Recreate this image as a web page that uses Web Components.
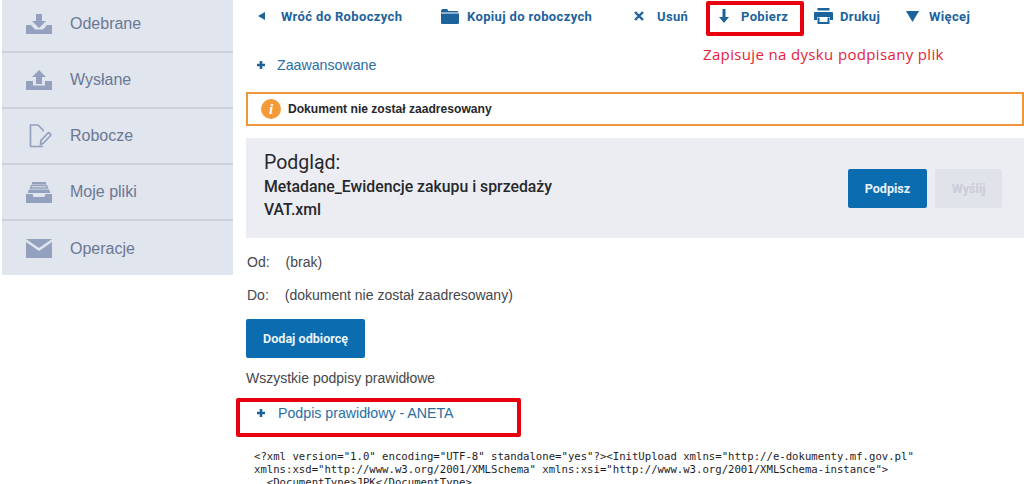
<!DOCTYPE html>
<html lang="pl">
<head>
<meta charset="utf-8">
<title>Podgląd</title>
<style>
  html, body { margin: 0; padding: 0; height: 484px; overflow: hidden; background: #fff; }
  body { font-family: "Liberation Sans", Arial, sans-serif; }
</style>
</head>
<body>
<app-shell>
  <side-nav slot="side">
    <nav-item icon="inbox" first>Odebrane</nav-item>
    <nav-item icon="outbox">Wysłane</nav-item>
    <nav-item icon="draft">Robocze</nav-item>
    <nav-item icon="files">Moje pliki</nav-item>
    <nav-item icon="mail" last>Operacje</nav-item>
  </side-nav>

  <tool-bar>
    <tool-item icon="back" gap="15" width="183">Wróć do Roboczych</tool-item>
    <tool-item icon="folder" gap="8" width="193">Kopiuj do roboczych</tool-item>
    <tool-item icon="close" gap="13" width="85">Usuń</tool-item>
    <tool-item icon="down" gap="12" width="95" marked>Pobierz</tool-item>
    <tool-item icon="print" gap="7" width="92">Drukuj</tool-item>
    <tool-item icon="more" gap="10" width="70">Więcej</tool-item>
  </tool-bar>
  <plus-link gap="12" style="margin:25px 0 0 22px">Zaawansowane</plus-link>
  <alert-box>Dokument nie został zaadresowany</alert-box>
  <preview-head>
    <span slot="title">Podgląd:</span>
    <span slot="name">Metadane_Ewidencje zakupu i sprzedaży<br>VAT.xml</span>
    <ui-button slot="actions">Podpisz</ui-button>
    <ui-button slot="actions" disabled>Wyślij</ui-button>
  </preview-head>
  <addr-line label="Od:" gap="16">(brak)</addr-line>
  <addr-line label="Do:" gap="16">(dokument nie został zaadresowany)</addr-line>
  <ui-button style="margin:16px 0 0 13px">Dodaj odbiorcę</ui-button>
  <sign-status>Wszystkie podpisy prawidłowe</sign-status>
  <plus-link boxed gap="13" style="margin:19px 0 0 22px">Podpis prawidłowy - ANETA</plus-link>
  <xml-view></xml-view>
</app-shell>

<script>
  const ICONS = {
    inbox: '<svg width="26" height="20" viewBox="0 0 26 20"><path d="M10 0h6v7h4l-7 7-7-7h4z"/><path d="M0 11h5l4 4.500h8L21 11h5v9H0z"/></svg>',
    outbox: '<svg width="26" height="20" viewBox="0 0 26 20"><path d="M13 0l7 7h-4v7h-6V7H6z"/><path d="M0 11h7v4.500h12V11h7v9H0z"/></svg>',
    draft: '<svg width="26" height="24" viewBox="0 0 26 24" fill="none" stroke="currentColor" stroke-width="1.700"><path d="M17 7.500V6l-5-5H4.500v21.500H17"/><path d="M14.500 20.500l.5-4 7-7.500c1-1 3.500 1.500 2.500 2.500l-7 7.500z"/></svg>',
    files: '<svg width="26" height="21" viewBox="0 0 26 21"><path d="M6 1.200h14" fill="none" stroke="currentColor" stroke-width="2.400"/><path d="M4.500 6l1-2.500h15l1 2.500z" fill="none" stroke="currentColor" stroke-width="1.400"/><path d="M3 7.500h20l1.500 3.500h-23z"/><path d="M0 12h6.500l1 3h11l1-3H26v9H0z"/></svg>',
    mail: '<svg width="26" height="19" viewBox="0 0 26 19"><path d="M0 0h26L13 9z"/><path d="M0 3l13 9 13-9v16H0z"/></svg>',
    back: '<svg width="8" height="8" viewBox="0 0 8 8"><path d="M7 0v8L0 4z"/></svg>',
    folder: '<svg width="18" height="15" viewBox="0 0 18 15"><path d="M0 2q0-2 2-2h4l1.500 2H16q1.500 0 1.500 1.500H0z"/><path d="M0 4.500h18V13.500q0 1.500-1.500 1.500h-15Q0 15 0 13.500z"/></svg>',
    close: '<svg width="10" height="10" viewBox="0 0 10 10" fill="none" stroke="currentColor" stroke-width="2.400"><path d="M1 1l8 8M9 1l-8 8"/></svg>',
    down: '<svg width="10" height="14" viewBox="0 0 10 14"><path d="M3.500 0h3v8H10l-5 6-5-6h3.500z"/></svg>',
    print: '<svg width="19" height="16" viewBox="0 0 19 16"><path d="M3.500 0h12v2.500h-12z"/><path d="M0 5q0-1 1-1h17q1 0 1 1v7h-3V9H3v3H0z"/><path d="M3.500 9.500h2V14h8V9.500h2V16h-12z"/></svg>',
    more: '<svg width="13" height="11" viewBox="0 0 13 11"><path d="M0 0h13L6.500 11z"/></svg>',
    plus: '<svg width="8" height="8" viewBox="0 0 8 8"><path d="M2.700 0h2.600v2.700H8v2.600H5.300V8H2.700V5.300H0V2.700h2.700z"/></svg>'
  };

  // wspolna pomocnicza: shadow root z markupem
  class Base extends HTMLElement {
    paint(html) {
      if (!this.shadowRoot) this.attachShadow({ mode: "open" });
      this.shadowRoot.innerHTML = html;
    }
  }

  class AppShell extends Base {
    connectedCallback() {
      this.paint(`
        <style>
          :host { display: flex; width: 1024px; height: 484px; overflow: hidden; position: relative; }
          .side { width: 233px; padding-left: 2px; box-sizing: border-box; flex: none; }
          .main { width: 791px; flex: none; }
        </style>
        <div class="side"><slot name="side"></slot></div>
        <div class="main"><slot></slot></div>`);
    }
  }

  class SideNav extends Base {
    connectedCallback() {
      this.paint(`
        <style>
          :host { display: block; background: #e1e5ee; height: 275px; overflow: hidden; }
        </style>
        <slot></slot>`);
    }
  }

  class NavItem extends Base {
    connectedCallback() {
      this.paint(`
        <style>
          :host { display: flex; align-items: center; box-sizing: border-box; height: 56px; padding-left: 24px;
            border-bottom: 2px solid #ccd0da; color: #6b7893; font-size: 16px; }
          :host([first]) { margin-top: -3px; }
          :host([last]) { border-bottom: 0; height: 55px; }
          .ic { width: 26px; height: 24px; display: flex; align-items: center; justify-content: center; color: #93a1bf; margin-right: 18px; }
          svg { fill: currentColor; display: block; }
          :host([icon="draft"]) svg { fill: none; }
        </style>
        <span class="ic">${ICONS[this.getAttribute("icon")]}</span><slot></slot>`);
    }
  }

  class ToolBar extends Base {
    connectedCallback() {
      this.paint(`
        <style>
          :host { display: flex; align-items: center; height: 32px; padding-left: 25px; }
        </style>
        <slot></slot>`);
    }
  }

  class ToolItem extends Base {
    connectedCallback() {
      const gap = this.getAttribute("gap");
      this.paint(`
        <style>
          :host { display: flex; align-items: center; flex: none; position: relative; height: 32px; box-sizing: border-box;
            width: ${this.getAttribute("width")}px; color: #1c639c; font: 700 13px Roboto, sans-serif; letter-spacing: .36px; white-space: nowrap; }
          .ic { display: flex; margin-right: ${gap}px; }
          svg { fill: currentColor; display: block; }
          .mark { position: absolute; left: -13px; top: 1px; width: 90px; height: 27px; border: 4px solid #e8000f; border-radius: 2px; }
        </style>
        <span class="ic">${ICONS[this.getAttribute("icon")]}</span><slot></slot>
        ${this.hasAttribute("marked") ? `<span class="mark"></span><callout-note>Zapisuje na dysku podpisany plik</callout-note>` : ""}`);
    }
  }

  class CalloutNote extends Base {
    connectedCallback() {
      this.paint(`
        <style>
          :host { position: absolute; left: -16px; top: 44px; color: #e5233a; font: 400 15px "Open Sans", sans-serif; letter-spacing: .35px; white-space: nowrap; }
        </style>
        <slot></slot>`);
    }
  }

  class PlusLink extends Base {
    connectedCallback() {
      this.paint(`
        <style>
          :host { display: flex; align-items: center; position: relative; width: max-content; height: 16px;
            color: #2b6ea3; font-size: 14.200px; white-space: nowrap; }
          svg { fill: #1c639c; display: block; margin: 0 ${this.getAttribute("gap")}px 0 2px; }
          .box { position: absolute; left: -19px; top: -7px; width: 277px; height: 31px; border: 4px solid #e8000f; border-radius: 2px; }
        </style>
        ${ICONS.plus}<slot></slot>
        ${this.hasAttribute("boxed") ? `<span class="box"></span>` : ""}`);
    }
  }

  class AlertBox extends Base {
    connectedCallback() {
      this.paint(`
        <style>
          :host { display: flex; align-items: center; box-sizing: border-box; width: 778px; height: 34px; margin: 19px 0 0 13px;
            border: 2px solid #f0963a; padding-left: 13px; font: 700 12.100px "Liberation Sans", sans-serif; color: #26282c; }
          i { width: 20px; height: 20px; border-radius: 50%; background: #f59a38; color: #fff; margin-right: 7px; display: flex;
            align-items: center; justify-content: center; font: italic 700 15px "Liberation Serif", serif; }
        </style>
        <i>i</i><slot></slot>`);
    }
  }

  class PreviewHead extends Base {
    connectedCallback() {
      this.paint(`
        <style>
          :host { display: flex; align-items: center; justify-content: space-between; box-sizing: border-box; height: 100px; width: 778px;
            margin: 12px 0 0 13px; padding: 0 22px 0 18px; background: #ecedf2; color: #26282c; font-family: Roboto, sans-serif; }
          .text { margin-top: -5px; }
          .title { font-size: 19.500px; line-height: 24px; }
          .name { font-size: 15.800px; font-weight: 500; line-height: 23px; }
          .actions { display: flex; gap: 8px; }
        </style>
        <div class="text">
          <div class="title"><slot name="title"></slot></div>
          <div class="name"><slot name="name"></slot></div>
        </div>
        <div class="actions"><slot name="actions"></slot></div>`);
    }
  }

  class UiButton extends Base {
    connectedCallback() {
      this.paint(`
        <style>
          :host { display: flex; width: max-content; align-items: center; height: 39px; padding: 0 17px; box-sizing: border-box;
            border-radius: 2px; background: #0b6cb0; color: #e9f2f9; font: 700 12.600px Roboto, sans-serif; }
          :host([disabled]) { background: #e1e3ea; color: #c9ccd6; padding: 0 16.500px; }
        </style>
        <slot></slot>`);
    }
  }

  class AddrLine extends Base {
    connectedCallback() {
      this.paint(`
        <style>
          :host { display: flex; margin: 17px 0 0 14px; line-height: 16px; color: #44474c; font-size: 14px; }
          :host(:first-of-type) { margin-top: 16px; }
          b { font-weight: 400; margin-right: ${this.getAttribute("gap")}px; }
        </style>
        <b>${this.getAttribute("label")}</b><slot></slot>`);
    }
  }

  class SignStatus extends Base {
    connectedCallback() {
      this.paint(`
        <style>
          :host { display: block; margin: 12px 0 0 13px; line-height: 16px; color: #44474c; font-size: 14px; }
        </style>
        <slot></slot>`);
    }
  }

  class XmlView extends Base {
    connectedCallback() {
      const src = '<?xml version="1.0" encoding="UTF-8" standalone="yes"?><InitUpload xmlns="http://e-dokumenty.mf.gov.pl"\n'
        + 'xmlns:xsd="http://www.w3.org/2001/XMLSchema" xmlns:xsi="http://www.w3.org/2001/XMLSchema-instance">\n'
        + '  <DocumentType>JPK</DocumentType>';
      this.paint(`
        <style>
          :host { display: block; margin: 29px 0 0 21px; }
          pre { margin: 0; font: 400 10.650px/13px "DejaVu Sans Mono", monospace; color: #1d1d1f; }
        </style>
        <pre></pre>`);
      this.shadowRoot.querySelector("pre").textContent = src;
    }
  }

  customElements.define("app-shell", AppShell);
  customElements.define("side-nav", SideNav);
  customElements.define("nav-item", NavItem);
  customElements.define("tool-bar", ToolBar);
  customElements.define("tool-item", ToolItem);
  customElements.define("callout-note", CalloutNote);
  customElements.define("plus-link", PlusLink);
  customElements.define("alert-box", AlertBox);
  customElements.define("preview-head", PreviewHead);
  customElements.define("ui-button", UiButton);
  customElements.define("addr-line", AddrLine);
  customElements.define("sign-status", SignStatus);
  customElements.define("xml-view", XmlView);
</script>
</body>
</html>
